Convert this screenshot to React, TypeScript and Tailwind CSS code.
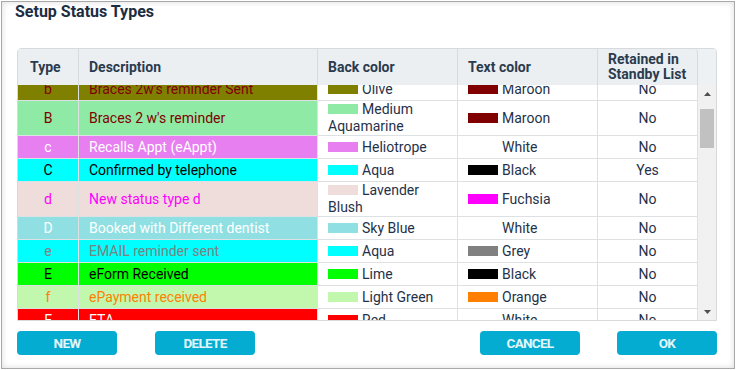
import React from 'react';

interface StatusRow {
  type: string;
  desc: string;
  bg: string;
  fg: string;
  back: string;
  text: string;
  retained: string;
}

const rows: StatusRow[] = [
  { type: 'b', desc: "Braces 2w's reminder Sent", bg: '#808000', fg: '#800000', back: 'Olive', text: 'Maroon', retained: 'No' },
  { type: 'B', desc: "Braces 2 w's reminder", bg: '#8feaa6', fg: '#800000', back: 'Medium Aquamarine', text: 'Maroon', retained: 'No' },
  { type: 'c', desc: 'Recalls Appt (eAppt)', bg: '#e77ff1', fg: '#ffffff', back: 'Heliotrope', text: 'White', retained: 'No' },
  { type: 'C', desc: 'Confirmed by telephone', bg: '#00ffff', fg: '#000000', back: 'Aqua', text: 'Black', retained: 'Yes' },
  { type: 'd', desc: 'New status type d', bg: '#eeddda', fg: '#ff00ff', back: 'Lavender Blush', text: 'Fuchsia', retained: 'No' },
  { type: 'D', desc: 'Booked with Different dentist', bg: '#8fdfe3', fg: '#ffffff', back: 'Sky Blue', text: 'White', retained: 'No' },
  { type: 'e', desc: 'EMAIL reminder sent', bg: '#00ffff', fg: '#808080', back: 'Aqua', text: 'Grey', retained: 'No' },
  { type: 'E', desc: 'eForm Received', bg: '#00ff00', fg: '#000000', back: 'Lime', text: 'Black', retained: 'No' },
  { type: 'f', desc: 'ePayment received', bg: '#c2f8ad', fg: '#ff8000', back: 'Light Green', text: 'Orange', retained: 'No' },
  { type: 'F', desc: 'ETA', bg: '#ff0000', fg: '#ffffff', back: 'Red', text: 'White', retained: 'No' },
];

const Swatch: React.FC<{ color: string }> = ({ color }) => (
  <span className="inline-block w-[30px] h-[10px] mr-[4px]" style={{ backgroundColor: color }} />
);

const Button: React.FC<{ label: string }> = ({ label }) => (
  <button className="w-[100px] h-[24px] rounded-[4px] bg-[#03acd0] text-[#e3f6fa] text-[13.5px] font-bold tracking-[-0.7px] uppercase">
    {label}
  </button>
);

const App: React.FC = () => {
  return (
    <div className="w-[736px] h-[370px] bg-white p-px" style={{ fontFamily: 'Roboto, "Liberation Sans", sans-serif' }}>
      <div className="w-full h-full border border-[#a9a9a9] shadow-[inset_0_0_6px_rgba(0,0,0,0.14)] px-[15px]">
        <h1 className="h-[20px] leading-[20px] text-[16px] font-bold text-[#1c2d43] -ml-[2px]">Setup Status Types</h1>

        {/* grid */}
        <div className="mt-[26px] w-[700px] border border-[#d6dadd] rounded-t-[4px] flex">
          <div className="w-[680px]">
            <div className="grid grid-cols-[61px_239px_140px_140px_100px] h-[36px] bg-[#ebeff2] text-[14px] font-bold text-[#2b3b4e] leading-[15px]">
              <div className="border-r border-[#d6dbde] pl-3 flex items-center">Type</div>
              <div className="border-r border-[#d6dbde] pl-[10px] flex items-center">Description</div>
              <div className="border-r border-[#d6dbde] pl-[10px] flex items-center">Back color</div>
              <div className="border-r border-[#d6dbde] pl-[10px] flex items-center">Text color</div>
              <div className="border-r border-[#d6dbde] pl-[10px] flex items-center rounded-tr-[4px]">Retained in Standby List</div>
            </div>
            <div className="h-[235px] overflow-hidden">
              <div className="-mt-[7px]">
                {rows.map((row, i) => (
                  <div
                    key={i}
                    className="grid grid-cols-[61px_239px_140px_140px_100px] border-b border-[#dde1e4] text-[14px] leading-[17px] text-[#1f3249]"
                  >
                    <div
                      className="min-h-[22px] border-r border-[#dde1e4] flex items-center justify-center"
                      style={{ backgroundColor: row.bg, color: row.fg }}
                    >
                      {row.type}
                    </div>
                    <div
                      className="min-h-[22px] border-r border-[#dde1e4] flex items-center pl-[10px]"
                      style={{ backgroundColor: row.bg, color: row.fg }}
                    >
                      {row.desc}
                    </div>
                    <div className="min-h-[22px] border-r border-[#dde1e4] flex items-center pl-[10px] pr-[6px]">
                      <span>
                        <Swatch color={row.bg} />
                        {row.back}
                      </span>
                    </div>
                    <div className="min-h-[22px] border-r border-[#dde1e4] flex items-center pl-[10px] pr-[6px]">
                      <span>
                        <Swatch color={row.fg} />
                        {row.text}
                      </span>
                    </div>
                    <div className="min-h-[22px] border-r border-[#dde1e4] flex items-center justify-center">
                      {row.retained}
                    </div>
                  </div>
                ))}
              </div>
            </div>
          </div>

          {/* scrollbar */}
          <div className="w-[18px] bg-[#f1f1f1] flex flex-col rounded-tr-[4px]">
            <div className="h-[36px] bg-[#eef1f3] rounded-tr-[4px]" />
            <div className="h-[17px] flex items-center justify-center">
              <svg width="7" height="4" viewBox="0 0 7 4"><path d="M3.5 0 L7 4 L0 4 Z" fill="#505050" /></svg>
            </div>
            <div className="flex-1 px-[2px]">
              <div className="mt-[7px] h-[39px] bg-[#c1c1c1]" />
            </div>
            <div className="h-[17px] flex items-center justify-center">
              <svg width="7" height="4" viewBox="0 0 7 4"><path d="M0 0 L7 0 L3.5 4 Z" fill="#505050" /></svg>
            </div>
          </div>
        </div>

        <div className="mt-[10px] w-[700px] flex">
          <Button label="New" />
          <div className="ml-[38px]">
            <Button label="Delete" />
          </div>
          <div className="ml-auto flex gap-[37px]">
            <Button label="Cancel" />
            <Button label="OK" />
          </div>
        </div>
      </div>
    </div>
  );
};

export default App;
